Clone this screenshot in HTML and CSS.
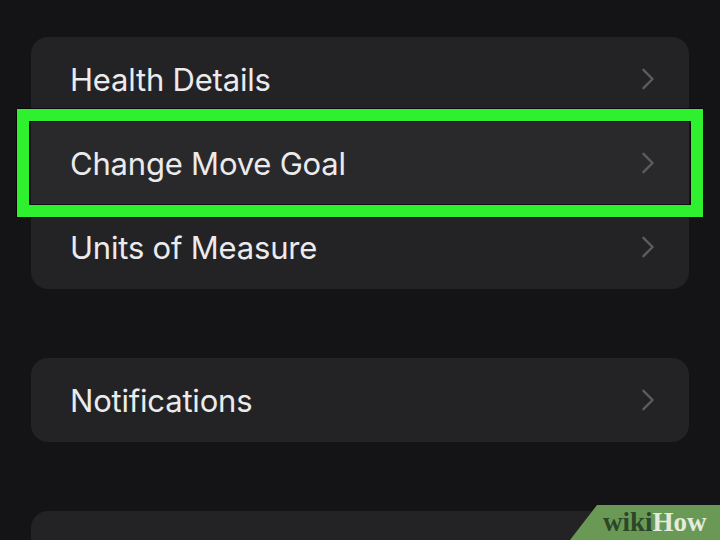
FILE: index.html
```html
<!DOCTYPE html>
<html lang="en">
  <head>
    <meta charset="UTF-8" />
    <meta name="viewport" content="width=device-width, initial-scale=1.0" />
    <title>Activity Settings</title>
    <link rel="stylesheet" href="styles.css">
  </head>
  <body>
    <main class="settings">
      <section class="group">
        <div class="row">
          <span class="label">Health Details</span>
          <svg class="chevron" viewBox="0 0 14 24"><polyline points="2 2 12 12 2 22"></polyline></svg>
        </div>
        <div class="row highlighted">
          <span class="label">Change Move Goal</span>
          <svg class="chevron" viewBox="0 0 14 24"><polyline points="2 2 12 12 2 22"></polyline></svg>
        </div>
        <div class="row">
          <span class="label">Units of Measure</span>
          <svg class="chevron" viewBox="0 0 14 24"><polyline points="2 2 12 12 2 22"></polyline></svg>
        </div>
      </section>

      <section class="group">
        <div class="row">
          <span class="label">Notifications</span>
          <svg class="chevron" viewBox="0 0 14 24"><polyline points="2 2 12 12 2 22"></polyline></svg>
        </div>
      </section>

      <section class="group tail"></section>
    </main>

    <div class="badge"><span class="wiki">wiki</span><span class="how">How</span></div>
  </body>
</html>
```

FILE: styles.css
```css
/* Dark settings list */
html,
body {
  overflow: hidden;
}

body {
  margin: 0;
  height: 540px;
  background-color: #141416;
  font-family: "Inter", "Roboto", sans-serif;
  color: #ebebed;
}

.settings {
  display: flex;
  flex-direction: column;
  gap: 69px;
  height: 540px;
  box-sizing: border-box;
  padding: 37px 31px 0;
  overflow: hidden;
}

/* --- Grouped card --- */
.group {
  flex-shrink: 0;
  background-color: #232325;
  border-radius: 17px;
}

.group.tail {
  height: 60px;
}

.row {
  position: relative;
  display: flex;
  align-items: center;
  justify-content: space-between;
  height: 84px;
  padding: 0 34px 0 39px;
}

.label {
  font-size: 31px;
  letter-spacing: -0.2px;
}

.chevron {
  width: 14px;
  height: 22px;
  fill: none;
  stroke: #5c5c60;
  stroke-width: 2.6px;
  stroke-linecap: round;
  stroke-linejoin: round;
}

/* Green callout frame round the picked row */
.row.highlighted {
  background-color: #29292b;
}

.row.highlighted::after {
  content: "";
  position: absolute;
  top: -12px;
  bottom: -12px;
  left: -14px;
  right: -14px;
  border: 12px solid #2ef02e;
  box-shadow: 0 0 0 1px rgba(0, 0, 0, 0.6), inset 0 0 0 1px rgba(0, 0, 0, 0.6);
}

/* --- Corner badge --- */
.badge {
  position: absolute;
  right: 0;
  bottom: 0;
  width: 150px;
  height: 35px;
  padding-left: 33px;
  box-sizing: border-box;
  display: flex;
  align-items: center;
  background-color: #6a9956;
  clip-path: polygon(27px 0, 100% 0, 100% 100%, 0 100%);
  font-family: "Liberation Serif", "DejaVu Serif", serif;
  font-weight: bold;
  font-size: 27px;
  line-height: 1;
}

.wiki {
  color: #2c4628;
}

.how {
  color: #e4ecdf;
}
```
